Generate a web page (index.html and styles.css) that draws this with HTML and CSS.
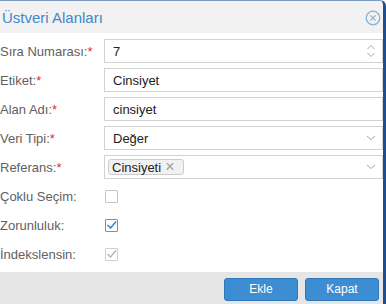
FILE: index.html
```html
<!DOCTYPE html>
<html lang="tr">
<head>
<meta charset="utf-8">
<link rel="stylesheet" href="styles.css">
</head>
<body>
<div class="dialog">
  <div class="header">
    <h1 class="title">Üstveri Alanları</h1>
    <span class="close">
      <svg width="16" height="16" viewBox="0 0 16 16"><circle cx="8" cy="8" r="6.8" fill="none" stroke="#8fb0d4" stroke-width="1.3"/><path d="M5.4 5.4 L10.6 10.6 M10.6 5.4 L5.4 10.6" stroke="#8fb0d4" stroke-width="1.3" fill="none"/></svg>
    </span>
  </div>
  <div class="body">
    <label class="lbl">Sıra Numarası:<span class="req">*</span></label>
    <div class="field"><span class="val">7</span>
      <svg class="icon spin" width="10" height="16" viewBox="0 0 10 16"><path d="M1.5 6 L5 2.5 L8.5 6 M1.5 10 L5 13.5 L8.5 10" stroke="#a5a5a5" stroke-width="1" fill="none"/></svg>
    </div>
    <label class="lbl">Etiket:<span class="req">*</span></label>
    <div class="field"><span class="val">Cinsiyet</span></div>
    <label class="lbl">Alan Adı:<span class="req">*</span></label>
    <div class="field"><span class="val">cinsiyet</span></div>
    <label class="lbl">Veri Tipi:<span class="req">*</span></label>
    <div class="field"><span class="val">Değer</span>
      <svg class="icon" width="10" height="6" viewBox="0 0 10 6"><path d="M1 1 L5 4.5 L9 1" stroke="#a5a5a5" stroke-width="1" fill="none"/></svg>
    </div>
    <label class="lbl">Referans:<span class="req">*</span></label>
    <div class="field tagfield"><span class="tag">Cinsiyeti<span class="x">×</span></span>
      <svg class="icon" width="10" height="6" viewBox="0 0 10 6"><path d="M1 1 L5 4.5 L9 1" stroke="#a5a5a5" stroke-width="1" fill="none"/></svg>
    </div>
    <label class="lbl">Çoklu Seçim:</label>
    <div class="cbrow"><span class="cb"></span></div>
    <label class="lbl">Zorunluluk:</label>
    <div class="cbrow"><span class="cb checked"><svg width="11" height="11" viewBox="0 0 11 11"><path d="M1.5 5 L4.5 8 L10 1.5" stroke="#3a8bd0" stroke-width="1.6" fill="none"/></svg></span></div>
    <label class="lbl">İndekslensin:</label>
    <div class="cbrow"><span class="cb disabled"><svg width="11" height="11" viewBox="0 0 11 11"><path d="M1.5 5 L4.5 8 L10 1.5" stroke="#b3b3b3" stroke-width="1.4" fill="none"/></svg></span></div>
  </div>
  <div class="footer">
    <button class="btn">Ekle</button>
    <button class="btn">Kapat</button>
  </div>
</div>
</body>
</html>
```
FILE: styles.css
```css
html, body {
  margin: 0;
  padding: 0;
  background: #ffffff;
}
body {
  font-family: "Liberation Sans", Arial, sans-serif;
  width: 386px;
  height: 304px;
  overflow: hidden;
}
.dialog {
  width: 386px;
  height: 304px;
  box-sizing: border-box;
  border-right: 3px solid #1d4f8e;
  border-top: 1px solid #7d9cc4;
  border-top-right-radius: 6px;
  overflow: hidden;
  display: flex;
  flex-direction: column;
  background: #fff;
}
.header {
  height: 32px;
  background: #f2f2f2;
  display: flex;
  align-items: center;
  justify-content: space-between;
  padding: 0 2px 0 2px;
  flex: none;
}
.title {
  margin: 0;
  font-size: 15px;
  font-weight: normal;
  color: #4189c9;
  padding-top: 1px;
}
.close {
  display: flex;
  padding-top: 1px;
}
.body {
  flex: 1;
  display: grid;
  grid-template-columns: 104px 1fr;
  grid-auto-rows: 24px;
  row-gap: 5px;
  padding-top: 6px;
  align-content: start;
}
.lbl {
  font-size: 13px;
  color: #616161;
  display: flex;
  align-items: center;
  white-space: nowrap;
}
.req {
  color: #e03030;
}
.field {
  border: 1px solid #d2d2d2;
  box-sizing: border-box;
  height: 24px;
  display: flex;
  align-items: center;
  justify-content: space-between;
  padding: 0 6px 0 8px;
  font-size: 13px;
  color: #222;
}
.tagfield {
  padding-left: 3px;
}
.icon {
  display: block;
}
.tag {
  border: 1px solid #cccccc;
  background: #f1f1f1;
  border-radius: 3px;
  height: 16px;
  box-sizing: border-box;
  display: flex;
  align-items: center;
  padding: 0 4px 0 3px;
  font-size: 13px;
  color: #222;
  width: 76px;
}
.x {
  color: #a0a0a0;
  margin-left: 4px;
  font-size: 16px;
  line-height: 14px;
}
.cbrow {
  display: flex;
  align-items: center;
}
.cb {
  width: 13px;
  height: 13px;
  box-sizing: border-box;
  border: 1px solid #c4c4c4;
  border-radius: 1px;
  display: flex;
  align-items: center;
  justify-content: center;
  margin-left: 1px;
}
.cb.checked {
  border-color: #5a9ad6;
}
.cb.disabled {
  border-color: #cfcfcf;
}
.footer {
  height: 32px;
  flex: none;
  background: #e6e6e6;
  display: flex;
  justify-content: flex-end;
  align-items: center;
  gap: 7px;
  padding-right: 4px;
}
.btn {
  width: 74px;
  height: 23px;
  background: #3d8dd2;
  border: 1px solid #2f78ba;
  border-radius: 3px;
  color: #fff;
  font-family: "Liberation Sans", Arial, sans-serif;
  font-size: 12px;
  padding: 0;
  margin-top: 2px;
}
```
